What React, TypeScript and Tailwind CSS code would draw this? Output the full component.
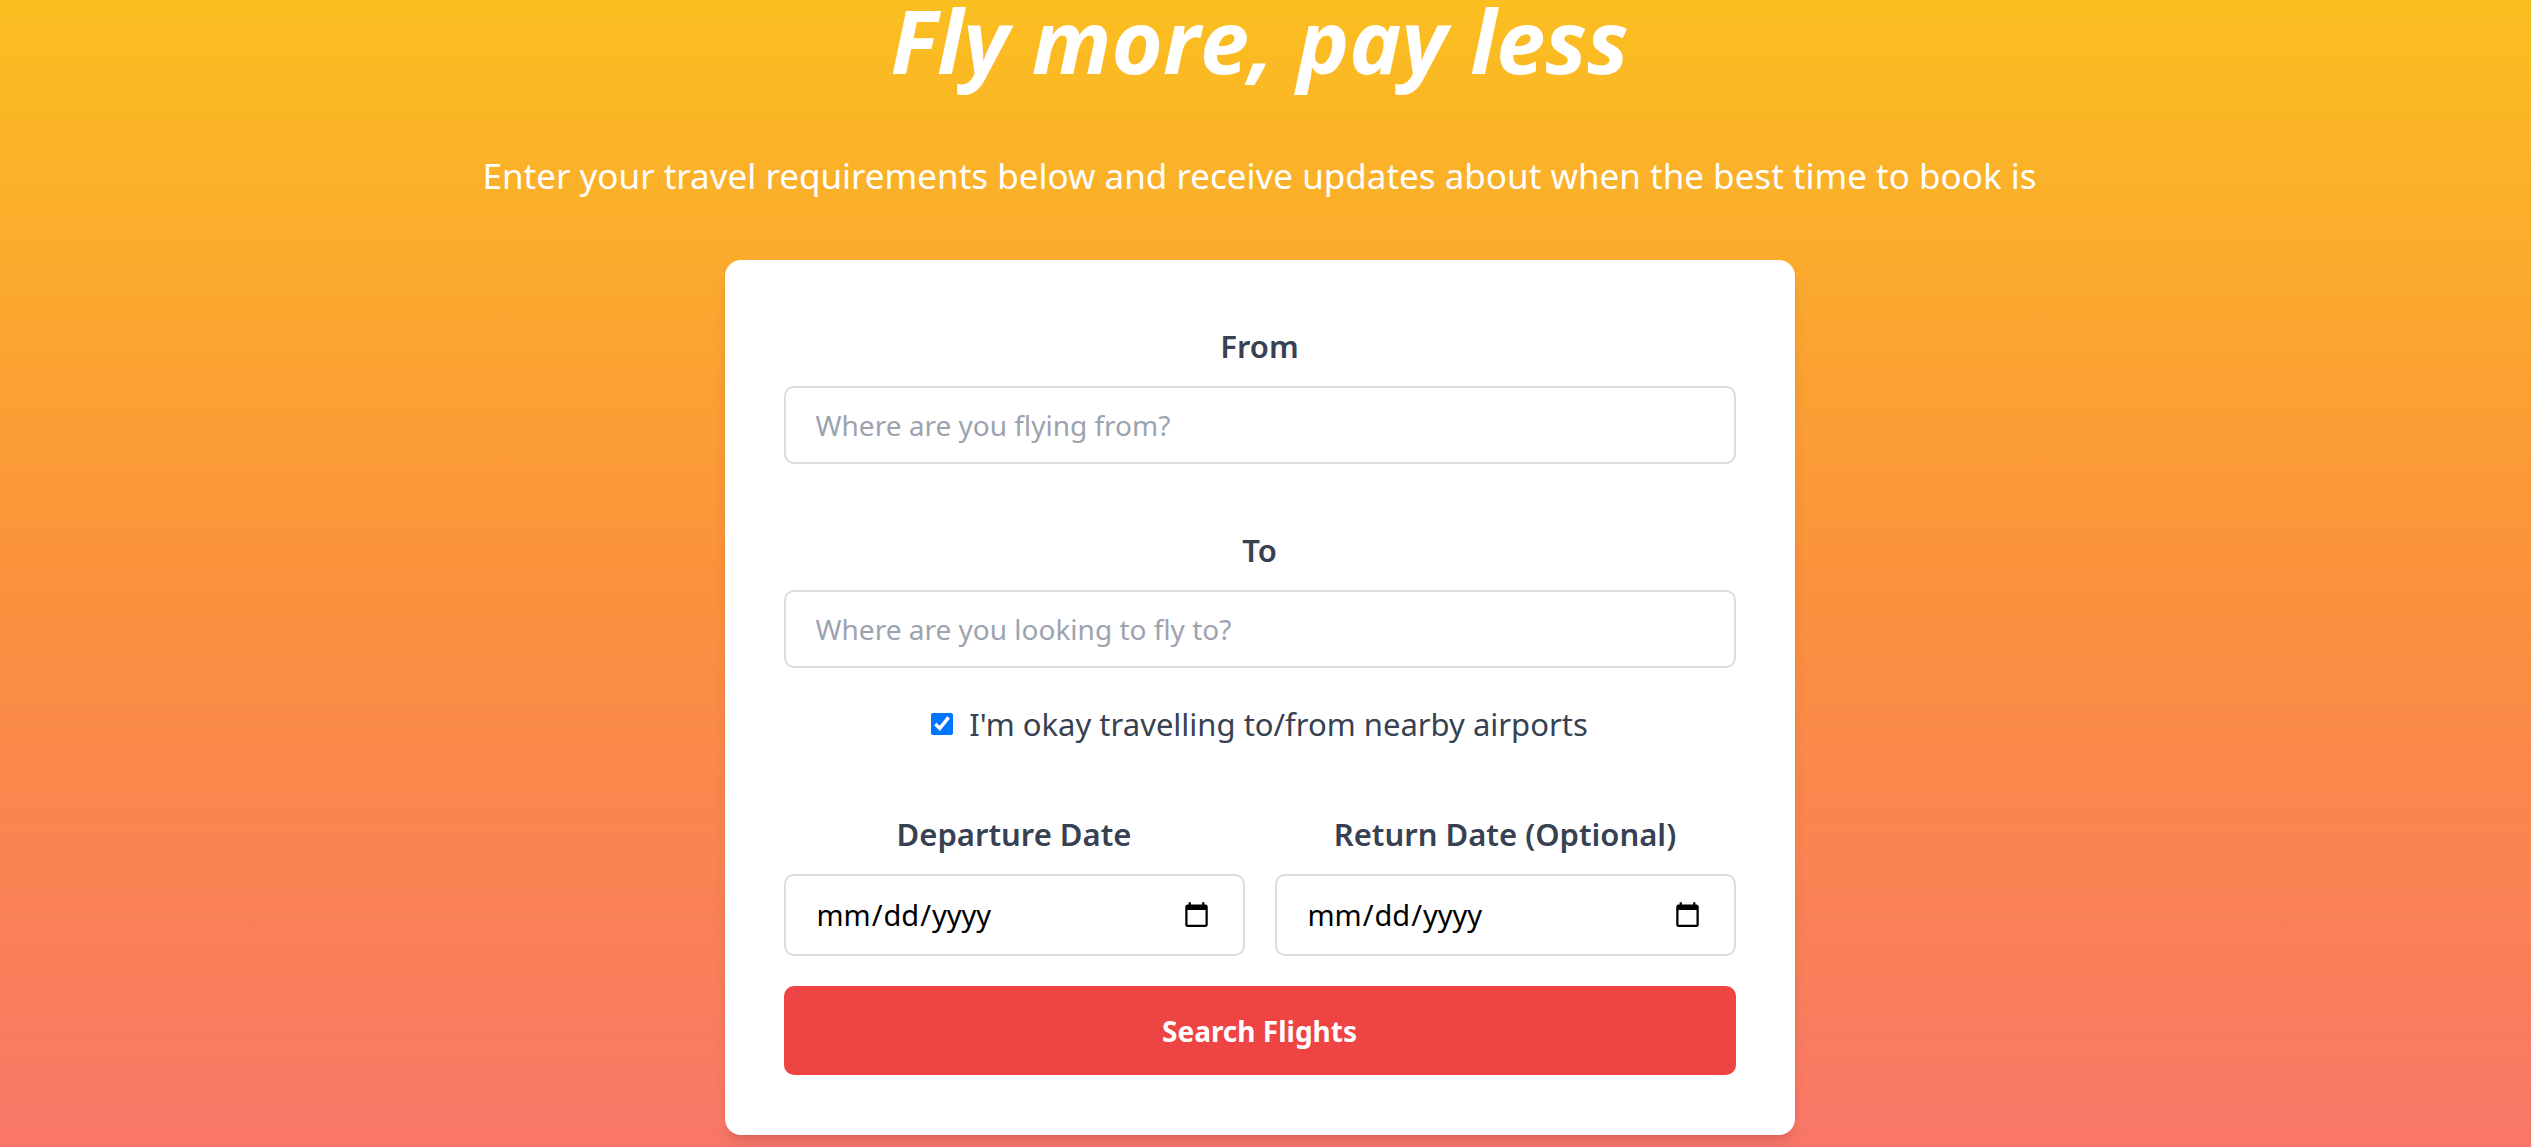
import type { ReactNode } from "react";

const labelClass = "block text-center text-[31px] leading-[48px] font-semibold text-[#374151]";
const inputClass =
  "block w-full rounded-[10px] border-2 border-[#d9dce2] bg-white px-[30px] leading-[48px] text-black placeholder:text-[#9ca3af]";

function Field({ id, label, children }: { id: string; label: string; children: ReactNode }) {
  return (
    <div>
      <label htmlFor={id} className={labelClass}>
        {label}
      </label>
      <div className="mt-4">{children}</div>
    </div>
  );
}

function TextField({ id, label, placeholder }: { id: string; label: string; placeholder: string }) {
  return (
    <Field id={id} label={label}>
      <input id={id} type="text" placeholder={placeholder} className={inputClass + " h-[78px] text-[28px]"} />
    </Field>
  );
}

function DateField({ id, label }: { id: string; label: string }) {
  return (
    <Field id={id} label={label}>
      <input id={id} type="date" className={inputClass + " h-[82px] text-[29px] scheme-light"} />
    </Field>
  );
}

export default function App() {
  return (
    <main className="flex min-h-screen flex-col items-center overflow-hidden bg-linear-to-b/srgb from-[#fbbf20] via-[#fb923c] to-[#f97668] pr-3 text-center font-['Noto_Sans',sans-serif]">
      <h1 className="font-['Open_Sans',sans-serif] text-[88px] leading-[80px] font-bold text-white italic">
        Fly more, pay less
      </h1>
      <p className="mt-[68px] text-[35px] leading-[56px] text-white">
        Enter your travel requirements below and receive updates about when the best time to book is
      </p>
      <form className="mt-14 mb-3 w-full max-w-[1070px] rounded-2xl bg-white px-[59px] pt-[62px] pb-[60px] shadow-lg">
        <TextField id="from" label="From" placeholder="Where are you flying from?" />
        <div className="mt-[62px]">
          <TextField id="to" label="To" placeholder="Where are you looking to fly to?" />
        </div>
        <div className="mt-8 flex items-center justify-center gap-4">
          <input id="nearby" type="checkbox" defaultChecked className="size-[22px]" />
          <label htmlFor="nearby" className="text-[31px] leading-[48px] text-[#374151]">
            I'm okay travelling to/from nearby airports
          </label>
        </div>
        <div className="mt-[62px] grid grid-cols-2 gap-[30px]">
          <DateField id="departure" label="Departure Date" />
          <DateField id="return" label="Return Date (Optional)" />
        </div>
        <button
          type="button"
          className="mt-[30px] h-[89px] w-full rounded-[10px] bg-[#ef4444] text-[28px] font-bold text-white"
        >
          Search Flights
        </button>
      </form>
    </main>
  );
}
